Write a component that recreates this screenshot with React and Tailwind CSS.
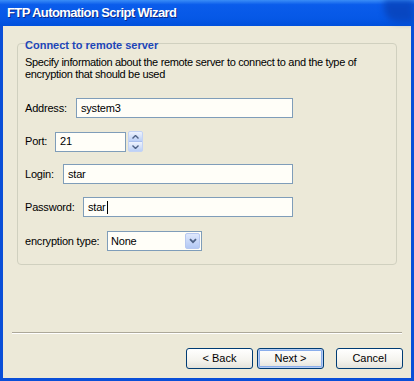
import React from "react";

const Field = ({ value, className = "", caret = false }) => (
  <div
    className={`h-[20px] border border-[#7f9db9] bg-[#fffef8] pl-[4px] flex items-center text-black ${className}`}
  >
    <span>{value}</span>
    {caret && <span className="ml-[1px] w-[1px] h-[13px] bg-black" />}
  </div>
);

const XpButton = ({ children, primary }) => (
  <button
    type="button"
    className={`w-[67px] h-[21px] rounded-[3px] border border-[#003c74] bg-[linear-gradient(to_bottom,#ffffff,#f4f3ee_60%,#e3e2da)] text-black text-[11px] leading-none ${
      primary ? "shadow-[inset_0_0_0_1px_#b6cdf3,inset_0_0_0_2px_#89adeb]" : ""
    }`}
  >
    {children}
  </button>
);

export default function App() {
  return (
    <div className="w-[414px] h-[381px] flex flex-col bg-[#0a4fd8] font-['Liberation_Sans',Arial,sans-serif] text-[11px] overflow-hidden">
      {/* title bar */}
      <div className="relative h-[26px] shrink-0 flex items-center pl-[7px] bg-[linear-gradient(to_bottom,#3a8df7,#0a5ceb_18%,#0658e6_70%,#0050dc)]">
        <span className="text-white font-bold text-[13px] tracking-[-0.6px] [text-shadow:1px_1px_0_#0a2a8a]">
          FTP Automation Script Wizard
        </span>
        <div className="absolute right-0 top-0 w-[30px] h-[22px] rounded-bl-[14px] bg-[#0842b8] blur-[3px] opacity-80" />
      </div>

      {/* client area */}
      <div className="flex-1 ml-[3px] mr-[3px] mb-[3px] bg-[#ece9d8] flex flex-col">
        <div className="ml-[14px] mt-[17px] w-[380px] h-[222px] border border-[#d0d0bf] rounded-[4px] pl-[7px] tracking-[-0.2px]">
          <div className="-mt-[5px] leading-[13px] font-bold text-[#1c46b8] tracking-normal">
            Connect to remote server
          </div>
          <div className="mt-[4px] leading-[12px] text-black tracking-[-0.33px]">
            Specify information about the remote server to connect to and the type of
            <br />
            encryption that should be used
          </div>

          <div className="mt-[18px] flex items-center">
            <span className="w-[51px]">Address:</span>
            <Field value="system3" className="w-[217px]" />
          </div>

          <div className="mt-[13px] flex items-center h-[21px]">
            <span className="w-[30px]">Port:</span>
            <Field value="21" className="w-[71px] h-[19px]" />
            <div className="ml-[2px] w-[15px] h-[21px] flex flex-col rounded-[2px] border border-[#c3d3f5] bg-[#c9d8f7] overflow-hidden">
              <div className="flex-1 bg-[linear-gradient(to_bottom,#eef3fd,#bcd0f6)] border-b border-[#a9bfee] flex items-center justify-center">
                <svg width="7" height="4" viewBox="0 0 7 4">
                  <path d="M0.5 3.5 L3.5 0.5 L6.5 3.5" stroke="#4d6185" strokeWidth="1.4" fill="none" />
                </svg>
              </div>
              <div className="flex-1 bg-[linear-gradient(to_bottom,#eef3fd,#bcd0f6)] flex items-center justify-center">
                <svg width="7" height="4" viewBox="0 0 7 4">
                  <path d="M0.5 0.5 L3.5 3.5 L6.5 0.5" stroke="#4d6185" strokeWidth="1.4" fill="none" />
                </svg>
              </div>
            </div>
          </div>

          <div className="mt-[12px] flex items-center">
            <span className="w-[38px]">Login:</span>
            <Field value="star" className="w-[230px]" />
          </div>

          <div className="mt-[13px] flex items-center">
            <span className="w-[58px]">Password:</span>
            <Field value="star" caret className="w-[210px]" />
          </div>

          <div className="mt-[14px] flex items-center">
            <span className="w-[82px]">encryption type:</span>
            <div className="w-[95px] h-[20px] border border-[#7f9db9] bg-[#fffef8] flex items-center pl-[3px] pr-[1px]">
              <span className="flex-1">None</span>
              <div className="w-[15px] h-[16px] rounded-[2px] border border-[#b7c8f0] bg-[linear-gradient(to_bottom,#dfe8fc,#b3c8f4)] flex items-center justify-center">
                <svg width="8" height="6" viewBox="0 0 8 6">
                  <path d="M1 1.2 L4 4.2 L7 1.2" stroke="#4d6185" strokeWidth="1.8" fill="none" />
                </svg>
              </div>
            </div>
          </div>
        </div>

        <div className="ml-[9px] mt-[67px] w-[390px] border-t border-[#aca899] border-b border-b-white" />

        <div className="mt-[14px] flex justify-end pr-[8px]">
          <XpButton>&lt; Back</XpButton>
          <div className="ml-[4px]">
            <XpButton primary>Next &gt;</XpButton>
          </div>
          <div className="ml-[12px]">
            <XpButton>Cancel</XpButton>
          </div>
        </div>
      </div>
    </div>
  );
}
